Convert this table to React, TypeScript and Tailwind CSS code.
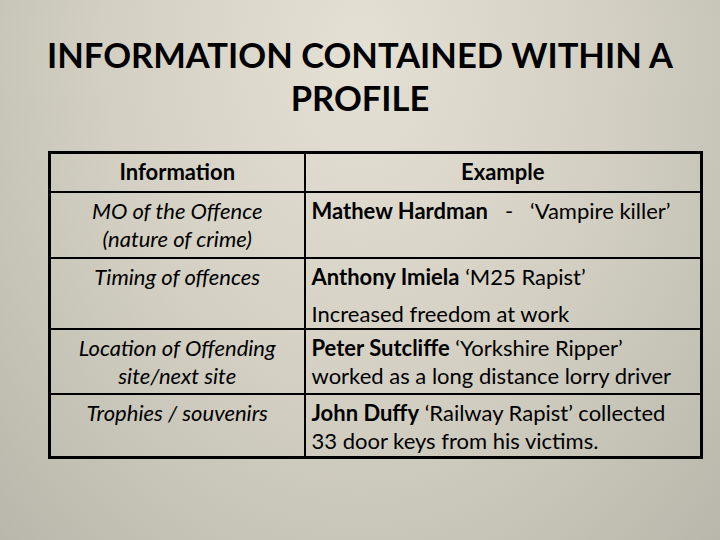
import React from 'react'

const rows = [
  {
    info: ['MO of the Offence', '(nature of crime)'],
    h: 'h-[66px]',
    example: (
      <p>
        <b>Mathew Hardman</b>&nbsp;&nbsp; - &nbsp;&nbsp;‘Vampire killer’
      </p>
    ),
  },
  {
    info: ['Timing of offences'],
    h: 'h-[70px]',
    example: (
      <>
        <p>
          <b>Anthony Imiela</b> ‘M25 Rapist’
        </p>
        <p className="mt-[9px]">Increased freedom at work</p>
      </>
    ),
  },
  {
    info: ['Location of Offending', 'site/next site'],
    h: 'h-[65px]',
    example: (
      <p>
        <b>Peter Sutcliffe</b> ‘Yorkshire Ripper’
        <br />
        worked as a long distance lorry driver
      </p>
    ),
  },
  {
    info: ['Trophies / souvenirs'],
    h: 'h-[64px]',
    example: (
      <p>
        <b>John Duffy</b> ‘Railway Rapist’ collected
        <br />
        33 door keys from his victims.
      </p>
    ),
  },
]

export default function App() {
  return (
    <div
      className="w-[720px] h-[540px] overflow-hidden text-black bg-[radial-gradient(ellipse_at_50%_10%,#e4e1d4_0%,#d3d0c3_50%,#b9b7ab_100%)]"
      style={{ fontFamily: 'Lato, "Open Sans", sans-serif' }}
    >
      <h1 className="pt-[33px] text-center font-bold text-[34.5px] leading-[43px]">
        INFORMATION CONTAINED WITHIN A
        <br />
        PROFILE
      </h1>

      <table className="mt-[32px] ml-[48px] w-[652px] table-fixed border-collapse border-[3px] border-black text-[22px] leading-[28px]">
        <colgroup>
          <col className="w-[255px]" />
          <col className="w-[397px]" />
        </colgroup>
        <thead>
          <tr className="h-[39px]">
            <th className="border-2 border-black font-bold text-center align-middle">Information</th>
            <th className="border-2 border-black font-bold text-center align-middle">Example</th>
          </tr>
        </thead>
        <tbody>
          {rows.map((r, i) => (
            <tr key={i} className={r.h}>
              <td className="border-2 border-black align-top text-center italic pt-[4px]">
                {r.info.map((l) => (
                  <div key={l}>{l}</div>
                ))}
              </td>
              <td className="border-2 border-black align-top pl-[6px] pr-[2px] pt-[4px] whitespace-nowrap">
                {r.example}
              </td>
            </tr>
          ))}
        </tbody>
      </table>
    </div>
  )
}
